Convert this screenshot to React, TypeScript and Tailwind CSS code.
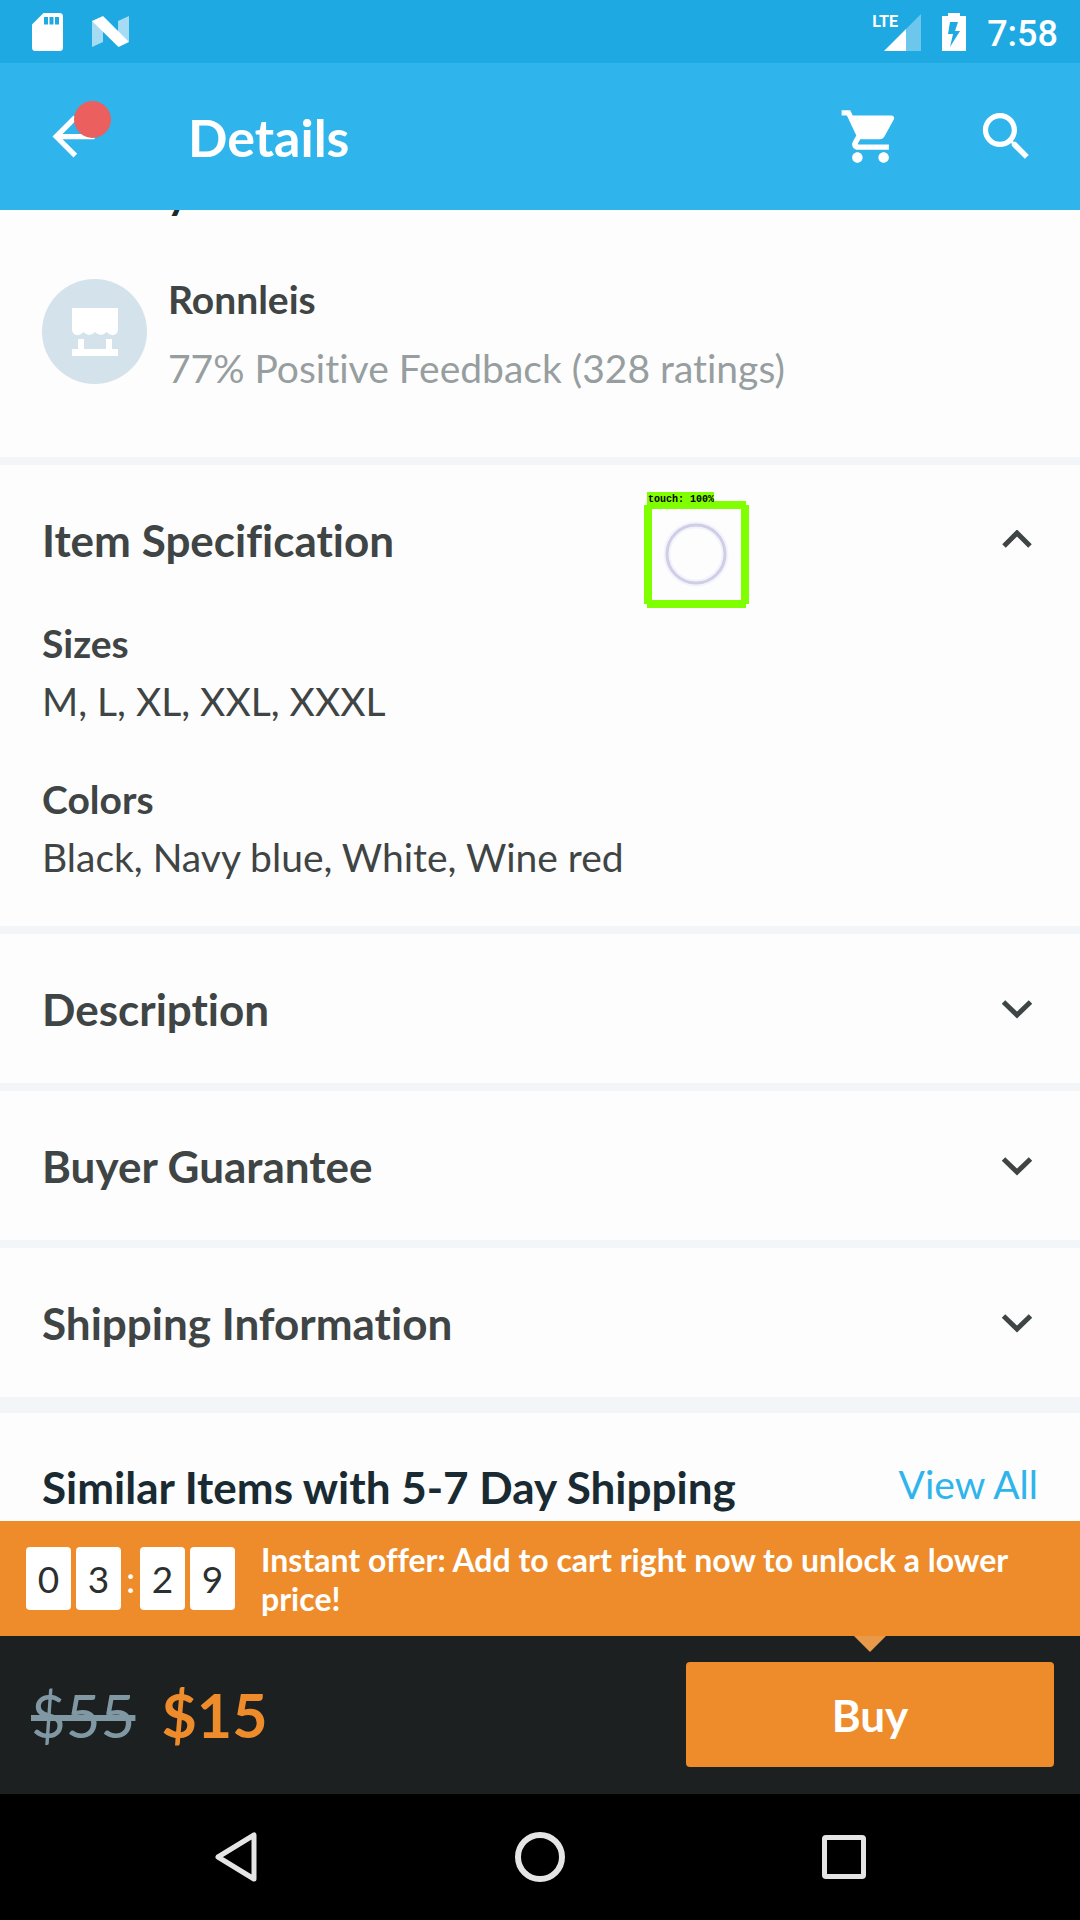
import type { ReactNode } from "react";

function SdCardIcon() {
  return (
    <svg width="31" height="38" viewBox="0 0 31 38" aria-hidden="true">
      <path fill="#fff" fillRule="evenodd" d="M11.500 0H27.500a3.500 3.500 0 0 1 3.500 3.500V34.500a3.500 3.500 0 0 1-3.500 3.500H3.500A3.500 3.500 0 0 1 0 34.500V11.500ZM12 4v7.500h4V4ZM17.500 4v7.500h4V4ZM23 4v7.500h4V4Z" />
    </svg>
  );
}

function NougatIcon() {
  return (
    <svg width="37" height="31" viewBox="0 0 37 31" aria-hidden="true">
      <path fill="#fff" opacity=".6" d="M0 5L11 10V26L0 31ZM26 5L37 0V26L26 21Z" />
      <path fill="#fff" d="M0 5L11 0L37 26L26.500 31Z" />
    </svg>
  );
}

function SignalIcon() {
  return (
    <span className="relative block h-[38px] w-[49px]">
      <svg className="absolute right-0 bottom-0" width="37" height="37" viewBox="0 0 37 37" aria-hidden="true">
        <path fill="#fff" opacity=".35" d="M37 0V37H22V15Z" />
        <path fill="#fff" d="M22 15V37H0Z" />
      </svg>
      <span className="absolute top-0 left-0 font-[Roboto] text-[16px] leading-[18px] font-bold text-white">LTE</span>
    </span>
  );
}

function BatteryIcon() {
  return (
    <svg width="24" height="38" viewBox="0 0 24 38" aria-hidden="true">
      <path fill="#fff" fillRule="evenodd" d="M6 0H18V3H24V38H0V3H6ZM8 9L6 21H11L8 34L18 18H13L16 9Z" />
    </svg>
  );
}

function StoreIcon() {
  return (
    <svg width="46" height="48" viewBox="0 0 46 48" aria-hidden="true">
      <path fill="#fff" d="M0 0H46V22L45 25Q40 30 34.500 24Q29 30 23 24Q17 30 11.500 24Q6 30 1 25L0 22ZM6 31H12V41H34V31H40V41H46V48H0V41H6Z" />
    </svg>
  );
}

function Chevron({ up = false }: { up?: boolean }) {
  return (
    <svg className="shrink-0" width="32" height="20" viewBox="0 0 32 20" aria-hidden="true">
      <path fill="none" stroke="#3f4444" strokeWidth="5" d={up ? "M3 16L16 3L29 16" : "M2.500 3L16 16L29.500 3"} />
    </svg>
  );
}

function MaterialIcon({ d }: { d: string }) {
  return (
    <svg width="63" height="63" viewBox="0 0 24 24" fill="currentColor" aria-hidden="true">
      <path d={d} />
    </svg>
  );
}

function Row({ title, open = false }: { title: string; open?: boolean }) {
  return (
    <button type="button" aria-expanded={open} className="flex h-[149px] w-full items-center justify-between pr-[47px] pl-[42px] text-left">
      <span className="text-[44px] leading-[52px] font-bold">{title}</span>
      <Chevron up={open} />
    </button>
  );
}

function Section({ children }: { children: ReactNode }) {
  return <section className="border-b-8 border-[#f3f6f8]">{children}</section>;
}

function Spec({ name, value }: { name: string; value: string }) {
  return (
    <div>
      <dt className="text-[39px] leading-[58px] font-bold">{name}</dt>
      <dd className="text-[39px] leading-[58px]">{value}</dd>
    </div>
  );
}

function Digit({ value }: { value: string }) {
  return <span className="flex h-[63px] w-[45px] items-center justify-center rounded-[4px] bg-white text-[37px] text-[#2b2f30]">{value}</span>;
}

function TouchMarker() {
  return (
    <div className="pointer-events-none absolute top-[27px] left-[644px]">
      <svg className="block" width="105" height="116" viewBox="0 0 105 116" aria-hidden="true">
        <path fill="#80ff00" d="M3 0H70V9H102V13H105V112H102V116H3V112H0V13H3ZM8 17V108H97V17Z" fillRule="evenodd" />
        <circle cx="52" cy="62" r="29" fill="none" stroke="#f3f3fd" strokeWidth="7" />
        <circle cx="52" cy="62" r="29" fill="none" stroke="#d0cee4" strokeWidth="3" />
      </svg>
      <span className="absolute top-0 left-1 font-['Liberation_Mono',monospace] text-[10px] leading-[15px] font-bold whitespace-nowrap text-black">touch: 100%</span>
    </div>
  );
}

export default function App() {
  return (
    <div className="flex h-screen flex-col overflow-hidden bg-[#fdfdfd] font-[Lato,sans-serif] text-[#3f4444] [font-variant-ligatures:none]">
      <div className="flex h-[63px] shrink-0 items-center justify-between bg-[#1fa9e2] pr-[22px] pl-8">
        <div className="flex items-center gap-[29px]">
          <SdCardIcon />
          <NougatIcon />
        </div>
        <div className="flex items-center gap-[21px]">
          <SignalIcon />
          <BatteryIcon />
          <time className="pt-1 font-[Roboto] text-[36px] leading-[40px] font-medium text-white">7:58</time>
        </div>
      </div>

      <header className="flex h-[147px] shrink-0 items-center bg-[#2fb5eb] pr-[42px] pl-[42px] text-white">
        <button type="button" aria-label="Back" className="relative">
          <MaterialIcon d="M20 11H7.830l5.590-5.590L12 4l-8 8 8 8 1.410-1.410L7.830 13H20v-2z" />
          <span className="absolute -top-1 left-8 size-[37px] rounded-full bg-[#eb5f5f]" />
        </button>
        <h1 className="ml-[83px] flex-1 text-[52px] leading-[60px] font-bold">Details</h1>
        <div className="flex gap-[73px]">
          <button type="button" aria-label="Cart">
            <MaterialIcon d="M7 18c-1.100 0-1.990.9-1.990 2S5.900 22 7 22s2-.9 2-2-.9-2-2-2zM1 2v2h2l3.600 7.590-1.350 2.450c-.16.280-.25.610-.25.960 0 1.100.9 2 2 2h12v-2H7.420c-.14 0-.25-.11-.25-.25l.03-.12.900-1.630h7.450c.75 0 1.410-.41 1.750-1.030l3.580-6.490c.08-.14.120-.31.120-.48 0-.55-.45-1-1-1H5.210l-.94-2H1zm16 16c-1.100 0-1.990.9-1.990 2s.89 2 1.990 2 2-.9 2-2-.9-2-2-2z" />
          </button>
          <button type="button" aria-label="Search">
            <MaterialIcon d="M15.500 14h-.79l-.28-.27C15.410 12.590 16 11.110 16 9.500 16 5.910 13.090 3 9.500 3S3 5.910 3 9.500 5.910 16 9.500 16c1.610 0 3.090-.59 4.230-1.570l.27.280v.79l5 4.990L20.490 19l-4.990-5zm-6 0C7.010 14 5 11.990 5 9.500S7.010 5 9.500 5 14 7.010 14 9.500 11.990 14 9.500 14z" />
          </button>
        </div>
      </header>

      <main className="min-h-0 flex-1 overflow-hidden">
        <Section>
          <h2 className="-mt-11 pl-[42px] text-[44px] leading-[52px] font-bold text-[#192a32]">Sold By</h2>
          <div className="flex gap-[21px] pt-[61px] pb-[73px] pl-[42px]">
            <span className="flex size-[105px] shrink-0 items-center justify-center rounded-full bg-[#d4e2eb]">
              <StoreIcon />
            </span>
            <div className="h-[105px]">
              <p className="text-[39px] leading-[40px] font-bold">Ronnleis</p>
              <p className="mt-[29px] text-[39px] leading-[40px] text-[#979e9f]">77% Positive Feedback (328 ratings)</p>
            </div>
          </div>
        </Section>
        <div className="relative">
          <Section>
            <Row title="Item Specification" open />
            <dl className="flex flex-col gap-10 pb-10 pl-[42px]">
              <Spec name="Sizes" value="M, L, XL, XXL, XXXL" />
              <Spec name="Colors" value="Black, Navy blue, White, Wine red" />
            </dl>
          </Section>
          <TouchMarker />
        </div>
        <Section>
          <Row title="Description" />
        </Section>
        <Section>
          <Row title="Buyer Guarantee" />
        </Section>
        <Section>
          <Row title="Shipping Information" />
        </Section>
        <section className="flex items-start justify-between border-t-8 border-[#f3f6f8] pt-12 pr-[42px] pl-[42px]">
          <h2 className="text-[44px] leading-[52px] font-bold text-[#192a32]">Similar Items with 5-7 Day Shipping</h2>
          <a href="#similar" className="text-[39px] leading-[46px] text-[#2fb5eb]">View All</a>
        </section>
      </main>

      <aside className="flex h-[115px] shrink-0 items-center bg-[#ee8c2c] pr-6 pl-[26px] text-white">
        <div className="flex items-center gap-[5px]">
          <Digit value="0" />
          <Digit value="3" />
          <span className="w-[9px] text-center text-[37px] leading-[40px]">:</span>
          <Digit value="2" />
          <Digit value="9" />
        </div>
        <p className="ml-[26px] text-[32px] leading-[39px] font-bold">Instant offer: Add to cart right now to unlock a lower price!</p>
      </aside>

      <div className="flex h-[158px] shrink-0 items-start justify-between bg-[#1c2021] pt-[26px] pr-[26px] pl-[31px]">
        <div className="flex h-[105px] items-center gap-[26px]">
          <del className="text-[60px] leading-[70px] text-[#8098a3]">$55</del>
          <span className="text-[61px] leading-[70px] font-bold text-[#ee8c2c]">$15</span>
        </div>
        <div className="relative">
          <svg className="absolute -top-[26px] left-[168px]" width="32" height="16" viewBox="0 0 32 16" aria-hidden="true">
            <path fill="#e9994a" d="M0 0H32L16 16Z" />
          </svg>
          <button type="button" className="h-[105px] w-[368px] rounded-[4px] bg-[#ee8c2c] text-[44px] font-bold text-white">Buy</button>
        </div>
      </div>

      <nav className="grid h-[126px] shrink-0 grid-cols-3 bg-black px-[84px]">
        <button type="button" aria-label="Back" className="flex items-center justify-center">
          <svg width="42" height="50" viewBox="0 0 42 50" aria-hidden="true">
            <path fill="none" stroke="#e5e5e5" strokeWidth="5" strokeLinejoin="round" d="M39 3V47L3 25Z" />
          </svg>
        </button>
        <button type="button" aria-label="Home" className="flex items-center justify-center">
          <span className="size-[50px] rounded-full border-[6px] border-[#e5e5e5]" />
        </button>
        <button type="button" aria-label="Recent apps" className="flex items-center justify-center">
          <span className="size-11 rounded-[4px] border-[5px] border-[#e5e5e5]" />
        </button>
      </nav>
    </div>
  );
}
